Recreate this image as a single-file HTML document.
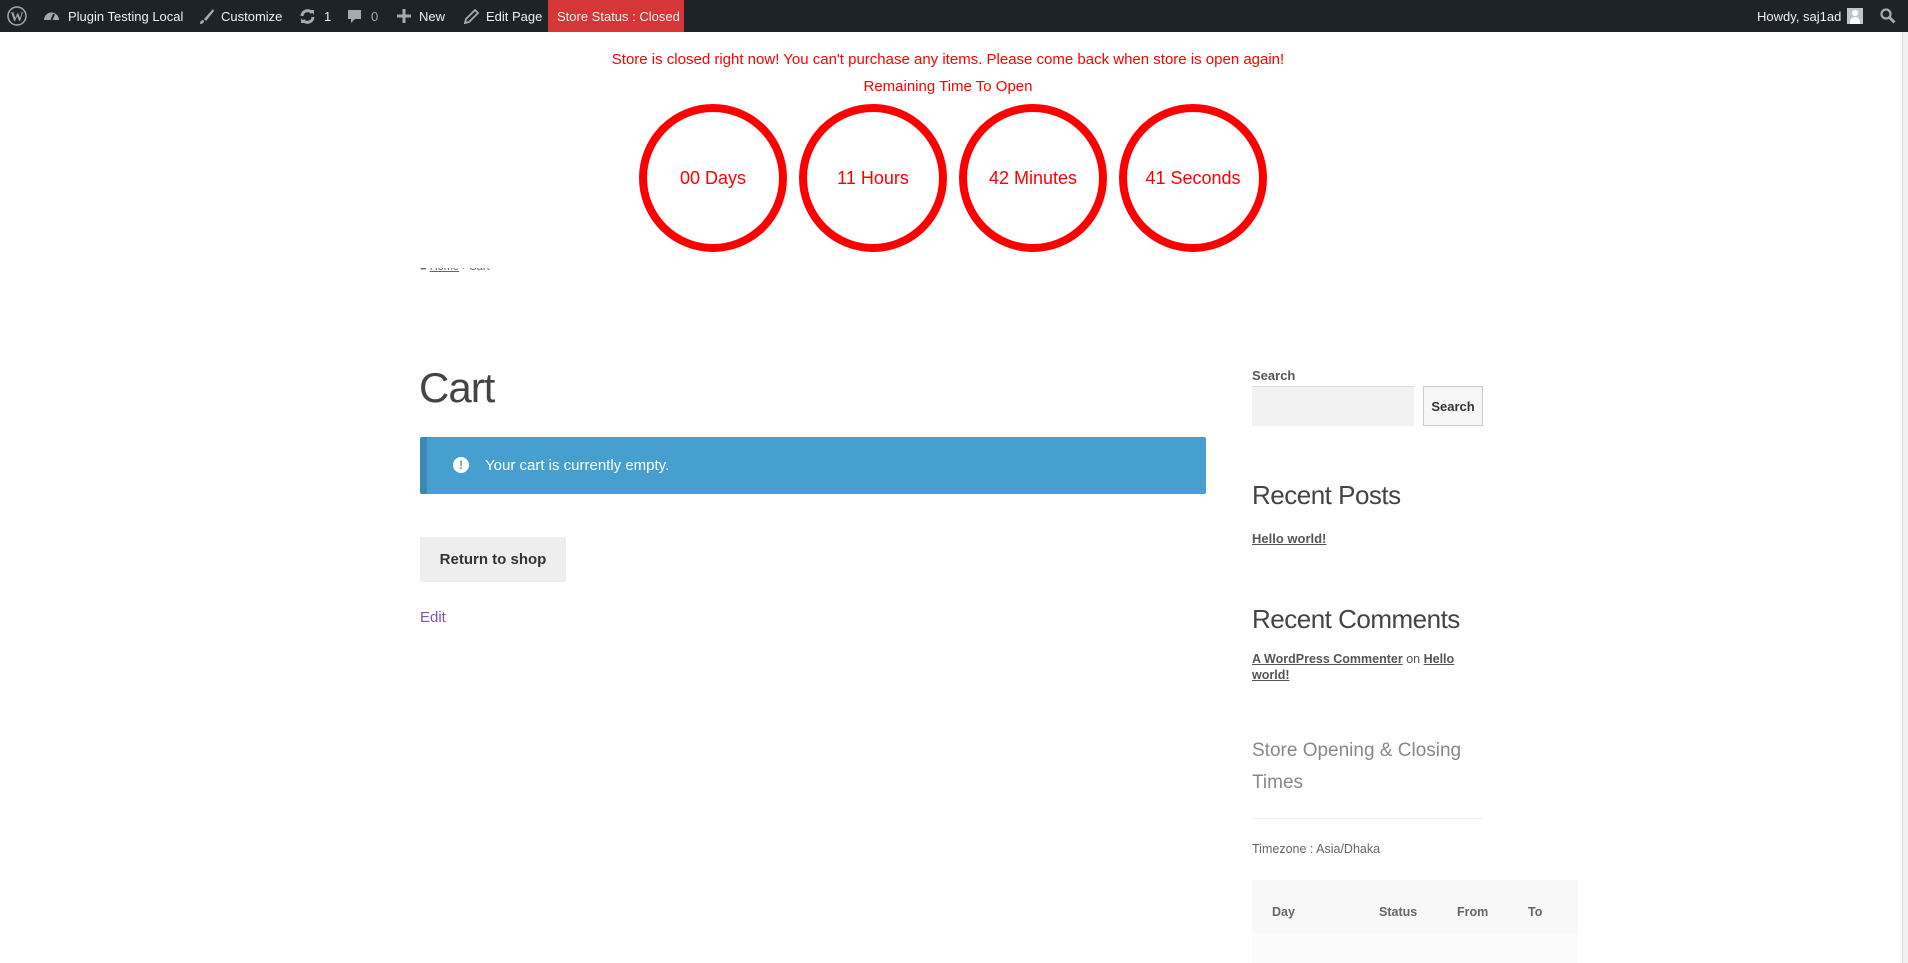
<!DOCTYPE html>
<html><head><meta charset="utf-8">
<style>
*{margin:0;padding:0;box-sizing:border-box}
body{width:1908px;height:963px;overflow:hidden;background:#fff;font-family:"Liberation Sans",sans-serif;position:relative;color:#404040}
.bar{position:absolute;left:0;top:0;width:1908px;height:32px;background:#1d2327;color:#f0f0f1;font-size:13px}
.bar span,.bar svg{position:absolute}
.bar .t{top:9px;white-space:nowrap}
.red{position:absolute;left:548px;top:0;width:136px;height:32px;background:#d63638}
.a{position:absolute;white-space:nowrap}
.circ{position:absolute;top:104px;width:148px;height:148px;border:8px solid #f00;border-radius:50%;color:#f00;font-size:18px;display:flex;align-items:center;justify-content:center}
.msg{color:#f00;font-size:15px;text-align:center;width:1908px;left:-6px}
u{text-decoration:underline}
</style></head><body>
<div class="bar">
<svg style="left:7px;top:6px" width="20" height="20" viewBox="0 0 20 20"><circle cx="10" cy="10" r="9" fill="none" stroke="#a7aaad" stroke-width="1.5"/><text x="10" y="15" font-size="13" font-weight="bold" text-anchor="middle" fill="#a7aaad" font-family="Liberation Serif">W</text></svg>
<svg style="left:43px;top:8px" width="17" height="15" viewBox="0 0 17 15"><path d="M1 12a7.5 7.5 0 1 1 15 0z" fill="#a7aaad"/><path d="M8.5 12L11 6" stroke="#1d2327" stroke-width="2"/></svg>
<span class="t" style="left:68px">Plugin Testing Local</span>
<svg style="left:198px;top:8px" width="17" height="17" viewBox="0 0 17 17"><path d="M15 1L6 11l2 2L16 3z" fill="#a7aaad"/><path d="M5 12c-2 0-3 2-3 4 2 0 4-1 4-3z" fill="#a7aaad"/></svg>
<span class="t" style="left:221px">Customize</span>
<svg style="left:299px;top:8px" width="17" height="17" viewBox="0 0 17 17"><path d="M3 8a5.5 5.5 0 0 1 10-3M14 9a5.5 5.5 0 0 1-10 3" fill="none" stroke="#a7aaad" stroke-width="3"/><path d="M11 2l4 0 0 5zM6 15l-4 0 0-5z" fill="#a7aaad"/></svg>
<span class="t" style="left:324px">1</span>
<svg style="left:347px;top:9px" width="15" height="16" viewBox="0 0 15 16"><path d="M1 1h13v9H8l-4 4v-4H1z" fill="#a7aaad"/></svg>
<span class="t" style="left:371px;color:#a7aaad">0</span>
<svg style="left:397px;top:9px" width="14" height="14" viewBox="0 0 14 14"><path d="M5.5 0h3v5.5H14v3H8.5V14h-3V8.5H0v-3h5.5z" fill="#a7aaad"/></svg>
<span class="t" style="left:419px">New</span>
<svg style="left:464px;top:9px" width="15" height="15" viewBox="0 0 15 15"><path d="M11 1l3 3-9 9-4 1 1-4z" fill="none" stroke="#a7aaad" stroke-width="1.8"/></svg>
<span class="t" style="left:486px">Edit Page</span>
<div class="red"></div>
<span class="t" style="left:557px">Store Status : Closed</span>
<span class="t" style="left:1757px">Howdy, saj1ad</span>
<div style="position:absolute;left:1847px;top:8px;width:16px;height:16px;background:#c3c4c7"><div style="position:absolute;left:5px;top:2px;width:6px;height:6px;border-radius:50%;background:#fff"></div><div style="position:absolute;left:3px;top:9px;width:10px;height:7px;border-radius:5px 5px 0 0;background:#fff"></div></div>
<svg style="left:1880px;top:8px" width="16" height="16" viewBox="0 0 16 16"><circle cx="6" cy="6" r="4.5" fill="none" stroke="#a7aaad" stroke-width="2.2"/><path d="M9.5 9.5L14.5 14.5" stroke="#a7aaad" stroke-width="3"/></svg>
</div>
<div style="position:absolute;right:0;top:32px;width:6px;height:931px;background:#f1f1f1;border-left:1px solid #ddd"></div>

<div class="a msg" style="top:51px">Store is closed right now! You can't purchase any items. Please come back when store is open again!</div>
<div class="a msg" style="top:78px">Remaining Time To Open</div>
<div class="circ" style="left:639px">00 Days</div>
<div class="circ" style="left:799px">11 Hours</div>
<div class="circ" style="left:959px">42 Minutes</div>
<div class="circ" style="left:1119px">41 Seconds</div>
<div class="a" style="left:420px;top:268px;height:6px;overflow:hidden;font-size:11px;color:#666"><div style="margin-top:-7px">■ <u>Home</u> › Cart</div></div>

<div class="a" style="left:419px;top:364px;font-size:42px;font-weight:300;color:#444;letter-spacing:-1px">Cart</div>
<div class="a" style="left:420px;top:437px;width:786px;height:57px;background:#479fcf;border-left:7px solid #3c88b0;border-radius:2px"></div>
<div class="a" style="left:453px;top:457px;width:16px;height:16px;border-radius:50%;background:#fff;color:#479fcf;font-size:12px;font-weight:bold;text-align:center;line-height:16px">!</div>
<div class="a" style="left:485px;top:457px;font-size:15px;color:#fff">Your cart is currently empty.</div>
<div class="a" style="left:420px;top:537px;width:146px;height:45px;background:#eee;font-size:15px;font-weight:bold;color:#333;text-align:center;line-height:46px">Return to shop</div>
<div class="a" style="left:420px;top:609px;font-size:15px;color:#7f54b3">Edit</div>

<div class="a" style="left:1252px;top:368px;font-size:13px;font-weight:bold;color:#555">Search</div>
<div class="a" style="left:1252px;top:386px;width:162px;height:40px;background:#f2f2f2;border-top:1px solid #ddd"></div>
<div class="a" style="left:1423px;top:386px;width:60px;height:40px;border:1px solid #ccc;background:#f6f6f6;font-size:13px;font-weight:bold;color:#333;text-align:center;line-height:39px">Search</div>
<div class="a" style="left:1252px;top:480px;font-size:26px;font-weight:300;color:#444;letter-spacing:-0.5px">Recent Posts</div>
<div class="a" style="left:1252px;top:531px;font-size:13px;font-weight:bold;color:#555"><u>Hello world!</u></div>
<div class="a" style="left:1252px;top:604px;font-size:26px;font-weight:300;color:#444;letter-spacing:-0.5px">Recent Comments</div>
<div class="a" style="left:1252px;top:651px;font-size:12.5px;color:#555;line-height:16px"><u><b>A WordPress Commenter</b></u> on <u><b>Hello</b></u><br><u><b>world!</b></u></div>
<div class="a" style="left:1252px;top:735px;font-size:19px;font-weight:300;color:#888;line-height:32px">Store Opening &amp; Closing<br>Times</div>
<div class="a" style="left:1252px;top:818px;width:231px;height:1px;background:#eee"></div>
<div class="a" style="left:1252px;top:842px;font-size:12.5px;color:#666">Timezone : Asia/Dhaka</div>
<div class="a" style="left:1252px;top:880px;width:326px;height:83px;background:#f8f8f8"></div>
<div class="a" style="left:1252px;top:934px;width:326px;height:29px;background:#fbfbfb"></div>
<div class="a" style="left:1272px;top:905px;font-size:12.5px;font-weight:bold;color:#666">Day</div>
<div class="a" style="left:1379px;top:905px;font-size:12.5px;font-weight:bold;color:#666">Status</div>
<div class="a" style="left:1457px;top:905px;font-size:12.5px;font-weight:bold;color:#666">From</div>
<div class="a" style="left:1528px;top:905px;font-size:12.5px;font-weight:bold;color:#666">To</div>
</body></html>
